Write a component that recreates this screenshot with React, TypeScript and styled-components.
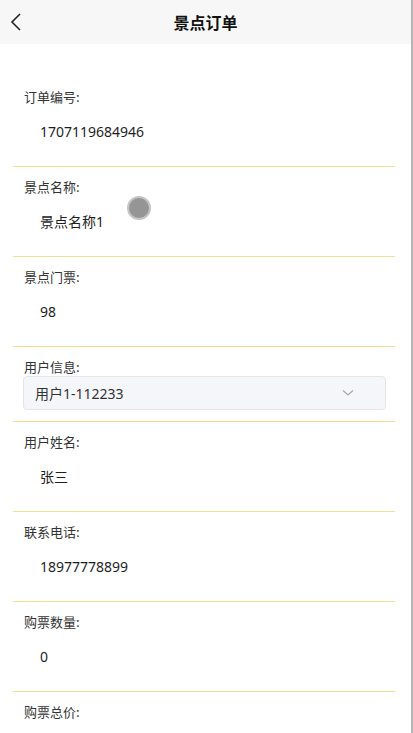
import React from 'react';
import styled, { createGlobalStyle } from 'styled-components';

const GlobalStyle = createGlobalStyle`
  html, body {
    margin: 0;
    padding: 0;
    background: #ffffff;
  }
  body {
    font-family: "Noto Sans", "Noto Sans CJK SC", sans-serif;
    overflow: hidden;
  }
`;

const Page = styled.div`
  position: relative;
  width: 411px;
  height: 733px;
  overflow: hidden;
  border-right: 2px solid #b4b4b4;
  background: #fff;
`;

const Header = styled.div`
  height: 44px;
  background: #f7f7f7;
  display: flex;
  align-items: center;
  justify-content: center;
  position: relative;
`;

const BackButton = styled.div`
  position: absolute;
  left: 8px;
  top: 11px;
  width: 16px;
  height: 22px;
  display: flex;
  align-items: center;
  justify-content: center;
`;

const Title = styled.h1`
  margin: 0;
  font-size: 16px;
  font-weight: 700;
  color: #111;
  font-family: "Noto Sans CJK SC", sans-serif;
`;

const List = styled.div`
  padding-top: 33px;
  display: flex;
  flex-direction: column;
`;

const Field = styled.div<{ $compact?: boolean }>`
  margin: 0 16px 0 13px;
  padding: 10px 10px ${(p) => (p.$compact ? '11px' : '24px')} 11px;
  border-bottom: 1px solid #f2df96;
`;

const Label = styled.div`
  font-size: 13px;
  line-height: 20px;
  color: #333;
  font-family: "Noto Sans CJK SC", sans-serif;
`;

const Value = styled.div`
  margin-top: 15px;
  padding-left: 16px;
  font-size: 14px;
  line-height: 20px;
  color: #1e1e1e;
  font-family: "Noto Sans", "Noto Sans CJK SC", sans-serif;
`;

const Select = styled.div`
  height: 32px;
  margin: -1px -1px 0 -1px;
  background: #f5f6fa;
  border: 1px solid #e3e5ea;
  border-radius: 4px;
  display: flex;
  align-items: center;
  justify-content: space-between;
  padding: 0 31px 0 11px;
  font-size: 14px;
  color: #333;
  font-family: "Noto Sans", "Noto Sans CJK SC", sans-serif;
`;

const TouchDot = styled.div`
  position: absolute;
  left: 127px;
  top: 196px;
  width: 20px;
  height: 20px;
  border-radius: 50%;
  background: #959595;
  border: 2px solid #c4c4c4;
`;

const fields = [
  { label: '订单编号:', value: '1707119684946' },
  { label: '景点名称:', value: '景点名称1' },
  { label: '景点门票:', value: '98' },
];

const more = [
  { label: '用户姓名:', value: '张三' },
  { label: '联系电话:', value: '18977778899' },
  { label: '购票数量:', value: '0' },
];

export default function App() {
  return (
    <>
      <GlobalStyle />
      <Page>
        <Header>
          <BackButton>
            <svg width="12" height="20" viewBox="0 0 12 20">
              <path d="M10 2 L2 10 L10 18" fill="none" stroke="#222" strokeWidth="1.6" />
            </svg>
          </BackButton>
          <Title>景点订单</Title>
        </Header>
        <List>
          {fields.map((f) => (
            <Field key={f.label}>
              <Label>{f.label}</Label>
              <Value>{f.value}</Value>
            </Field>
          ))}
          <Field $compact>
            <Label>用户信息:</Label>
            <Select>
              <span>用户1-112233</span>
              <svg width="12" height="8" viewBox="0 0 12 8">
                <path d="M1 1.5 L6 6 L11 1.5" fill="none" stroke="#a8a8a8" strokeWidth="1.2" />
              </svg>
            </Select>
          </Field>
          {more.map((f) => (
            <Field key={f.label}>
              <Label>{f.label}</Label>
              <Value>{f.value}</Value>
            </Field>
          ))}
          <Field>
            <Label>购票总价:</Label>
            <Value>&nbsp;</Value>
          </Field>
        </List>
        <TouchDot />
      </Page>
    </>
  );
}
